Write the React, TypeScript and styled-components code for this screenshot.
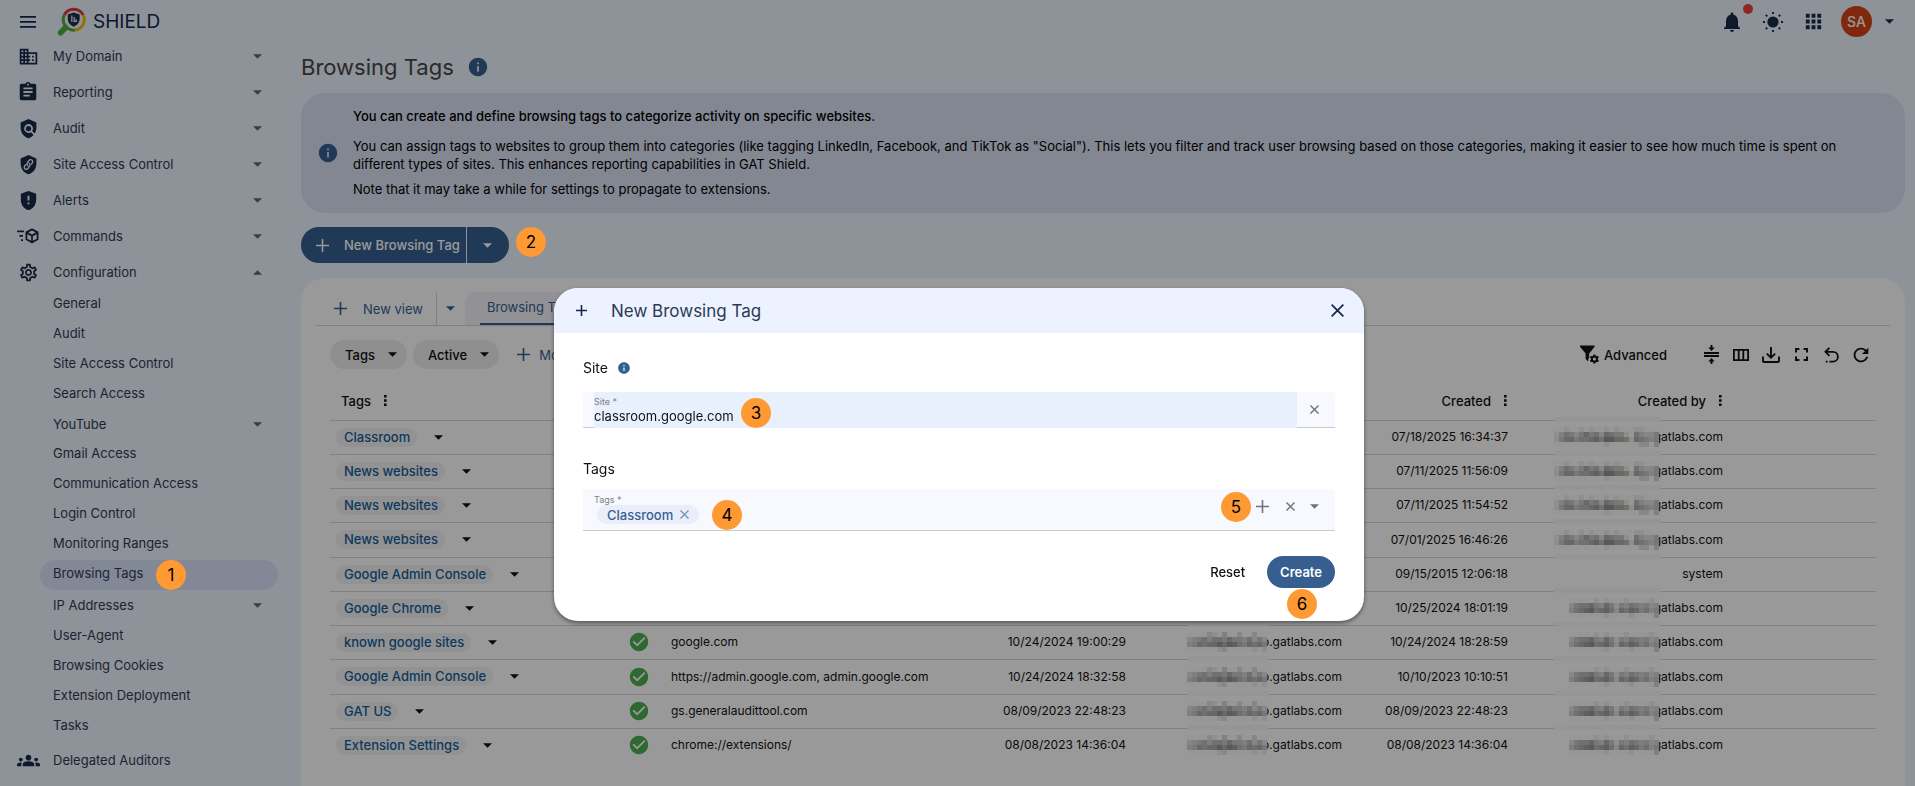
import React from "react";
import styled, { createGlobalStyle } from "styled-components";
import {
  MdApps,
  MdAssignment,
  MdCheckCircle,
  MdDomain,
  MdGppMaybe,
  MdGroups,
  MdInfo,
  MdNotifications,
  MdOutlineSettings,
  MdPolicy,
  MdRefresh,
} from "react-icons/md";

const GlobalStyle = createGlobalStyle`
  *, *::before, *::after { box-sizing: border-box; }
  body {
    margin: 0;
    background: #edf3ff;
    font-family: Inter, "Liberation Sans", sans-serif;
    font-size: 13px;
    line-height: 18px;
    color: #111;
  }
  button, input { font: inherit; color: inherit; }
  button { border: 0; padding: 0; background: none; cursor: pointer; }
  a { color: inherit; text-decoration: none; }
  svg { display: block; flex: none; }
  p, h1, h2, ul { margin: 0; padding: 0; }
`;

/* ---------- page frame ---------- */

const Page = styled.div`
  display: grid;
  grid-template-columns: 301px minmax(0, 1fr);
  min-height: 100vh;
`;

const Sidebar = styled.aside`
  color: #2f3d54;
`;

const Brand = styled.div`
  display: flex;
  align-items: center;
  height: 38px;
  padding: 5px 0 0 20px;
  font-size: 19px;
  color: #13294b;
`;

const MenuButton = styled.button`
  margin-right: 21px;
`;

const BrandName = styled.span`
  margin-left: 7px;
`;

const NavList = styled.ul`
  list-style: none;
`;

const navRow = `
  display: flex;
  align-items: center;
  width: 100%;
  text-align: left;
`;

const NavButton = styled.button`
  ${navRow}
  height: 36px;
  padding: 0 39px 0 16px;
`;

const NavLink = styled.a`
  ${navRow}
  height: 36px;
  padding: 0 39px 0 16px;
`;

const NavIcon = styled.span`
  display: flex;
  justify-content: center;
  width: 24px;
  margin-right: 13px;
  color: #182c49;
`;

const NavLabel = styled.span`
  flex: 1;
`;

const NavCaret = styled.span`
  color: #666;
`;

const SubLink = styled.a<{ $active?: boolean }>`
  display: flex;
  align-items: center;
  position: relative;
  height: 30px;
  margin: 0 23px 0 40px;
  padding: 0 16px 4px 13px;
  border-radius: 15px;
  background: ${(p) => (p.$active ? "#dae3fb" : "transparent")};
`;

const SubButton = styled.button<{ $tall?: boolean }>`
  ${navRow}
  height: ${(p) => (p.$tall ? 32 : 30)}px;
  padding: 0 39px 2px 53px;
`;

const Main = styled.main`
  display: flex;
  flex-direction: column;
  padding-right: 10px;
`;

const TopBar = styled.header`
  display: flex;
  align-items: center;
  justify-content: flex-end;
  height: 43px;
  padding-right: 11px;
  color: #182c49;
`;

const TopButton = styled.button`
  position: relative;
  display: flex;
  align-items: center;
  justify-content: center;
  width: 41px;
  height: 36px;
`;

const Dot = styled.span`
  position: absolute;
  top: 0;
  right: -1px;
  width: 10px;
  height: 10px;
  border-radius: 50%;
  background: #e8403a;
`;

const Account = styled.button`
  display: flex;
  align-items: center;
  gap: 13px;
  margin-left: 7px;
`;

const Avatar = styled.span`
  display: flex;
  align-items: center;
  justify-content: center;
  width: 31px;
  height: 31px;
  border-radius: 50%;
  background: #d84315;
  color: #fff;
  font-size: 14px;
  font-weight: 500;
`;

const TitleRow = styled.div`
  display: flex;
  align-items: center;
  gap: 13px;
  height: 47px;
  margin-bottom: 3px;
  color: #365f90;
`;

const Title = styled.h1`
  font-size: 22px;
  line-height: 28px;
  font-weight: 400;
  color: #474747;
`;

const Banner = styled.section`
  display: flex;
  align-items: center;
  gap: 14px;
  padding: 14px 14px 15px 16px;
  border-radius: 24px;
  background: #d9e2f4;
  color: #365f90;
`;

const BannerText = styled.div`
  flex: 1;
  color: #000;
`;

const Lead = styled.p`
  margin-bottom: 12px;
  font-weight: 500;
`;

const Para = styled.p`
  & + & {
    margin-top: 7px;
  }
`;

const SplitButton = styled.div`
  position: relative;
  display: flex;
  align-self: flex-start;
  margin: 14px 0 15px;
`;

const NewTagButton = styled.button`
  display: flex;
  align-items: center;
  gap: 15px;
  height: 36px;
  padding: 0 6px 0 15px;
  border-radius: 18px 0 0 18px;
  background: #365f90;
  color: #fff;
  font-weight: 500;
`;

const SplitToggle = styled.button`
  display: flex;
  align-items: center;
  justify-content: center;
  width: 42px;
  height: 36px;
  margin-left: 1px;
  border-radius: 0 18px 18px 0;
  background: #365f90;
  color: #fff;
`;

/* ---------- data card ---------- */

const Card = styled.section`
  flex: 1;
  padding: 14px 15px 22px;
  border-radius: 24px 24px 0 0;
  background: #fff;
`;

const Tabs = styled.div`
  display: flex;
  height: 34px;
  border-bottom: 1px solid #d6d6d6;
  color: #365f90;
`;

const NewView = styled.button`
  display: flex;
  align-items: center;
  gap: 16px;
  padding: 0 13px 0 18px;
`;

const ViewMenu = styled.button`
  display: flex;
  align-items: center;
  justify-content: center;
  width: 29px;
  border-left: 1px solid #d6d6d6;
`;

const Tab = styled.button`
  padding: 0 15px;
  border-radius: 12px 12px 0 0;
  background: #f3f3fa;
`;

const TabLabel = styled.span`
  display: flex;
  align-items: center;
  height: 33px;
  padding: 0 7px 1px;
  border-bottom: 2px solid #365f90;
`;

const Toolbar = styled.div`
  display: flex;
  align-items: center;
  height: 29px;
  margin: 14px 14px 13px;
`;

const FilterPill = styled.button`
  display: flex;
  align-items: center;
  gap: 13px;
  height: 29px;
  margin-right: 6px;
  padding: 0 10px 0 15px;
  border-radius: 15px;
  background: #eee;
  font-weight: 500;
`;

const MoreButton = styled.button`
  display: flex;
  align-items: center;
  gap: 9px;
  padding-left: 12px;
  color: #365f90;
`;

const Advanced = styled.button`
  display: flex;
  align-items: center;
  gap: 5px;
  margin-left: auto;
  margin-right: 29px;
  font-weight: 500;
`;

const ToolButton = styled.button`
  display: flex;
  justify-content: center;
  width: 30px;
`;

const Table = styled.table`
  width: calc(100% - 28px);
  margin: 0 14px;
  table-layout: fixed;
  border-collapse: separate;
  border-spacing: 0;
`;

const Col = styled.col<{ $w?: number }>`
  width: ${(p) => (p.$w ? `${p.$w}px` : "auto")};
`;

const Th = styled.th`
  height: 39px;
  padding: 0 11px 1px;
  border-bottom: 1px solid #d6d6d6;
  font-weight: 500;
  text-align: left;
`;

const ThInner = styled.span<{ $right?: boolean }>`
  display: flex;
  align-items: center;
  justify-content: ${(p) => (p.$right ? "flex-end" : "flex-start")};
  gap: 13px;
`;

const Row = styled.tr`
  height: 34px;
  &:nth-child(4n) {
    height: 35px;
  }
  &:last-child td {
    border-bottom-color: transparent;
  }
`;

const Td = styled.td<{ $right?: boolean }>`
  position: relative;
  padding: 0 10px 1px;
  border-bottom: 1px solid #d6d6d6;
  font-size: 12px;
  text-align: ${(p) => (p.$right ? "right" : "left")};
  white-space: nowrap;
`;

const TagCell = styled(Td)`
  padding-left: 6px;
`;

const StatusCell = styled(Td)`
  padding-left: 13px;
`;

const MaskedTd = styled(Td)<{ $edge: number; $band: number }>`
  &::before {
    content: "";
    position: absolute;
    top: -4px;
    right: ${(p) => p.$edge}px;
    width: ${(p) => p.$band}px;
    height: 5px;
    background: #f8f8f8;
  }
`;

const Flow = styled.span`
  display: flex;
  align-items: center;
`;

const Chip = styled.span`
  height: 19px;
  margin-right: 17px;
  padding: 0 7px 0 8px;
  border-radius: 10px;
  background: #f3f3f3;
  color: #14609c;
  font-size: 13px;
  font-weight: 500;
`;

const Plain = styled.button`
  display: flex;
`;

const Green = styled.span`
  display: flex;
  color: #4caf50;
`;

const Email = styled.span`
  display: flex;
  align-items: center;
  justify-content: flex-end;
  svg {
    position: relative;
    margin-right: -5px;
  }
`;

/* ---------- dialog ---------- */

const Backdrop = styled.div`
  position: fixed;
  inset: 0;
  z-index: 10;
  display: flex;
  align-items: flex-start;
  justify-content: center;
  padding: 288px 0 0 3px;
  background: rgba(0, 0, 0, 0.4);
`;

const Dialog = styled.div`
  width: 810px;
  max-width: 100%;
  border-radius: 24px;
  background: #fff;
  box-shadow: 0 2px 4px rgba(0, 0, 0, 0.45);
`;

const DialogHead = styled.div`
  display: flex;
  align-items: center;
  height: 45px;
  padding: 0 20px 0 22px;
  border-radius: 24px 24px 0 0;
  background: #ecf2ff;
  color: #13294b;
`;

const DialogTitle = styled.h2`
  flex: 1;
  margin-left: 24px;
  font-size: 17px;
  line-height: 24px;
  font-weight: 400;
  color: #2a3b55;
`;

const DialogBody = styled.form`
  padding: 25px 29px 33px;
`;

const GroupTitle = styled.div<{ $gap: number }>`
  display: flex;
  align-items: center;
  gap: 9px;
  height: 20px;
  margin-bottom: ${(p) => p.$gap}px;
  font-size: 14px;
  color: #365f90;
`;

const GroupText = styled.span`
  color: #111;
`;

const Field = styled.div`
  position: relative;
  display: flex;
  align-items: stretch;
  height: 36px;
  margin-bottom: 31px;
  padding-left: 11px;
  border-radius: 4px 4px 0 0;
  border-bottom: 1px solid #c9cacf;
  background: #f8f9ff;
  color: #6f7276;
`;

const FieldLabel = styled.label`
  font-size: 9px;
  line-height: 11px;
  color: #7c8087;
`;

const Filled = styled.div`
  position: relative;
  z-index: 1;
  flex: 1;
  display: flex;
  flex-direction: column;
  margin-bottom: -1px;
  padding-top: 4px;
  background: #e8f0fe;
`;

const SiteInput = styled.input`
  width: 100%;
  height: 18px;
  padding: 0;
  border: 0;
  outline: 0;
  background: transparent;
  color: #111;
`;

const FieldButton = styled.button<{ $w: number }>`
  display: flex;
  align-items: center;
  justify-content: center;
  width: ${(p) => p.$w}px;
`;

const ClearSite = styled(FieldButton)`
  padding-right: 4px;
`;

const TagField = styled(Field)`
  height: 42px;
  margin-bottom: 25px;
`;

const TagArea = styled.div`
  flex: 1;
  padding-top: 5px;
  display: flex;
  flex-direction: column;
`;

const PickedRow = styled.div`
  position: relative;
  display: flex;
  align-items: center;
  padding-left: 3px;
`;

const Picked = styled.span`
  display: flex;
  align-items: center;
  gap: 7px;
  height: 19px;
  padding: 0 10px;
  border-radius: 10px;
  background: #ebedfa;
  color: #365f90;
  font-weight: 500;
`;

const RemovePicked = styled(Plain)`
  color: #7896bb;
`;

const TagInput = styled.input`
  flex: 1;
  min-width: 0;
  height: 18px;
  padding: 0;
  border: 0;
  outline: 0;
  background: transparent;
`;

const FieldActions = styled.div`
  position: relative;
  display: flex;
  align-items: center;
  padding: 0 11px 6px 0;
`;

const Actions = styled.div`
  display: flex;
  justify-content: flex-end;
  align-items: center;
  gap: 22px;
  font-weight: 500;
`;

const CreateWrap = styled.div`
  position: relative;
`;

const CreateButton = styled.button`
  height: 32px;
  padding: 0 13px;
  border-radius: 16px;
  background: #365f90;
  color: #fff;
  font-weight: 600;
`;

/* Numbered step marker that sits over the interface. */
const Step = styled.span<{ $left: string; $top: number }>`
  position: absolute;
  z-index: 20;
  left: ${(p) => p.$left};
  top: ${(p) => p.$top}px;
  display: flex;
  align-items: center;
  justify-content: center;
  width: 30px;
  height: 30px;
  border-radius: 50%;
  background: #ff9933;
  color: #000;
  font-size: 17px;
  font-weight: 400;
`;

/* ---------- drawings ---------- */

const Caret = ({ up = false }: { up?: boolean }) => (
  <svg width="9" height="5" viewBox="0 0 10 5" fill="currentColor" aria-hidden="true">
    <path d={up ? "M0 5 5 0l5 5z" : "M0 0h10L5 5z"} />
  </svg>
);

const Plus = ({ size = 12, w = 2 }: { size?: number; w?: number }) => (
  <svg width={size} height={size} viewBox={`0 0 ${size} ${size}`} stroke="currentColor" strokeWidth={w} aria-hidden="true">
    <path d={`M${size / 2} 0v${size}M0 ${size / 2}h${size}`} />
  </svg>
);

const Cross = ({ size = 9, w = 1.4 }: { size?: number; w?: number }) => (
  <svg width={size} height={size} viewBox="0 0 10 10" stroke="currentColor" strokeWidth={(w * 10) / size} aria-hidden="true">
    <path d="M.5.5l9 9M9.5.5l-9 9" />
  </svg>
);

const Dots = () => (
  <svg width="3" height="11" viewBox="0 0 3 11" fill="currentColor" aria-hidden="true">
    <path d="M0 0h2.6v2.6H0zM0 4.2h2.6v2.6H0zM0 8.4h2.6V11H0z" />
  </svg>
);

const Burger = () => (
  <svg width="16" height="12" viewBox="0 0 16 12" fill="currentColor" aria-hidden="true">
    <path d="M0 0h16v1.7H0zM0 5h16v1.7H0zM0 10h16v1.7H0z" />
  </svg>
);

const Logo = () => (
  <svg width="29" height="30" viewBox="0 0 29 30" fill="none" aria-hidden="true">
    <circle cx="16.7" cy="12.5" r="9.5" fill="#f4f6fa" />
    <path d="M8.6 20.5l-5 5.2" stroke="#4caf3a" strokeWidth="5.6" strokeLinecap="round" />
    <path d="M7.2 8.2A10.6 10.6 0 0 1 26.2 8" stroke="#e03b36" strokeWidth="3" />
    <path d="M26.2 8a10.6 10.6 0 0 1-8.4 15.1" stroke="#f2bd0c" strokeWidth="3" />
    <path d="M17.8 23.1A10.6 10.6 0 0 1 7.2 8.2" stroke="#4caf3a" strokeWidth="3" />
    <path d="M16.7 5.4l6 2.1v4.2c0 3.6-2.4 6.4-6 8-3.6-1.6-6-4.4-6-8V7.5z" fill="#1d2f4c" />
    <path d="M14.8 15V8.6M17.2 10v4.6M19.2 12.2v2.6M16.3 14.3h4" stroke="#dfe5ef" strokeWidth="1.3" />
  </svg>
);

const ShieldLink = () => (
  <svg width="21" height="21" viewBox="0 0 24 24" aria-hidden="true">
    <path fill="currentColor" d="M12 1 3 5v6c0 5.55 3.84 10.74 9 12 5.16-1.26 9-6.45 9-12V5z" />
    <g fill="none" stroke="#edf3ff" strokeWidth="1.5" strokeLinecap="round" transform="rotate(-10 12 12)">
      <path d="M11 13.2a2.4 2.4 0 0 1 0-3.3l2.2-2.3a2.4 2.4 0 0 1 3.4 3.4l-1.2 1.2" />
      <path d="M13 10.7a2.4 2.4 0 0 1 0 3.4l-2.2 2.2a2.4 2.4 0 0 1-3.4-3.4l1.2-1.2" />
    </g>
  </svg>
);

const CommandBox = () => (
  <svg width="22" height="16" viewBox="0 0 22 16" fill="none" stroke="currentColor" strokeWidth="1.8" aria-hidden="true">
    <path d="M0 3.4h7M2.4 7.8H6M4 12.2h2" />
    <path d="M15 1.4l5.6 3v6.8L15 14.4l-5.6-3.2V4.4zM9.6 4.6l5.4 3 5.4-3M15 7.6v6.6" strokeLinejoin="round" />
  </svg>
);

const Sun = () => (
  <svg width="20" height="20" viewBox="0 0 20 20" aria-hidden="true">
    <circle cx="10" cy="10" r="5.6" fill="currentColor" />
    <path
      d="M10 0v2M10 18v2M0 10h2M18 10h2M2.8 2.8l1.5 1.5M15.7 15.7l1.5 1.5M2.8 17.2l1.5-1.5M15.7 4.3l1.5-1.5"
      stroke="currentColor"
      strokeWidth="1.9"
    />
  </svg>
);

const FilterCog = () => (
  <svg width="19" height="19" viewBox="0 0 19 19" fill="currentColor" aria-hidden="true">
    <path d="M0 .6h14.6v1.2L9.2 8.6v4.2l-1 1.4v2.4L5.6 14V8.6L0 1.8z" />
    <circle cx="14.4" cy="14" r="2.6" fill="none" stroke="currentColor" strokeWidth="2" />
    <path
      d="M14.4 9.4v2M14.4 16.6v2M10.4 11.7l1.7 1M16.7 15.3l1.7 1M10.4 16.3l1.7-1M16.7 12.7l1.7-1"
      stroke="currentColor"
      strokeWidth="2"
    />
  </svg>
);

const Compress = () => (
  <svg width="15" height="19" viewBox="0 0 15 19" aria-hidden="true">
    <path d="M0 8h15M0 11h15M7.5 0v3M7.5 16v3" stroke="currentColor" strokeWidth="1.9" />
    <path d="M4.3 2.6h6.4L7.5 6zM4.3 16.4h6.4L7.5 13z" fill="currentColor" />
  </svg>
);

const Columns = () => (
  <svg width="16" height="12" viewBox="0 0 16 12" fill="none" stroke="currentColor" strokeWidth="1.8" aria-hidden="true">
    <path d="M.9.9h14.2v10.2H.9zM5.7.9v10.2M10.3.9v10.2" />
  </svg>
);

const Download = () => (
  <svg width="18" height="16" viewBox="0 0 18 16" fill="none" stroke="currentColor" strokeWidth="1.9" aria-hidden="true">
    <path d="M1 9.5V14a1 1 0 0 0 1 1h14a1 1 0 0 0 1-1V9.5M9 0v10.4M4.8 6.6L9 10.6l4.2-4" />
  </svg>
);

const Expand = () => (
  <svg width="13" height="13" viewBox="0 0 13 13" fill="none" stroke="currentColor" strokeWidth="2" aria-hidden="true">
    <path d="M1 4.4V1h3.4M8.6 1H12v3.4M12 8.6V12H8.6M4.4 12H1V8.6" />
  </svg>
);

const Undo = () => (
  <svg width="15" height="16" viewBox="0 0 15 16" fill="none" stroke="currentColor" strokeWidth="1.8" aria-hidden="true">
    <path d="M5.4.8L1.4 4.8l4 4M1.6 4.8H9a4.8 4.8 0 0 1 0 9.8H5.4M3.6 14.6H1.8" />
  </svg>
);

/* Pixelated mask over the private part of an address: one digit per 5px cell. */
const MASKS: Record<string, string[]> = {
  long: [
    "001001010010100011000",
    "135424645265441053224",
    "146645567588665165434",
    "000000000010000002203",
  ],
  short: [
    "000001010001000010",
    "245564364143543423",
    "356785675265764534",
    "000000010000100003",
  ],
  narrow: [
    "0000210300200200",
    "2345355464435242",
    "3465668687546564",
    "0000001200000101",
  ],
};

const Mask = ({ kind }: { kind: string }) => {
  const rows = MASKS[kind];
  const width = rows[0].length * 5;
  return (
    <svg width={width} height="20" viewBox={`0 0 ${width} 20`} aria-hidden="true" shapeRendering="crispEdges">
      {rows.map((line, y) =>
        line.split("").map((d, x) => {
          const v = 252 - Number(d) * 13;
          const tint = (x * 7 + y * 3) % 5;
          return (
            <rect
              key={`${x}-${y}`}
              x={x * 5}
              y={y * 5}
              width="5"
              height="5"
              fill={`rgb(${v + (tint === 1 && d !== "0" ? 3 : 0)},${v - (tint === 1 ? 4 : 0)},${v + (tint === 3 && d !== "0" ? 3 : -3)})`}
            />
          );
        })
      )}
    </svg>
  );
};

/* ---------- content ---------- */

type NavEntry = { label: string; icon: React.ReactNode; open?: boolean };

const NAV: NavEntry[] = [
  { label: "My Domain", icon: <MdDomain size={21} /> },
  { label: "Reporting", icon: <MdAssignment size={22} /> },
  { label: "Audit", icon: <MdPolicy size={21} /> },
  { label: "Site Access Control", icon: <ShieldLink /> },
  { label: "Alerts", icon: <MdGppMaybe size={23} /> },
  { label: "Commands", icon: <CommandBox /> },
  { label: "Configuration", icon: <MdOutlineSettings size={21} />, open: true },
];

const SUB = [
  "General",
  "Audit",
  "Site Access Control",
  "Search Access",
  "YouTube",
  "Gmail Access",
  "Communication Access",
  "Login Control",
  "Monitoring Ranges",
  "Browsing Tags",
  "IP Addresses",
  "User-Agent",
  "Browsing Cookies",
  "Extension Deployment",
  "Tasks",
];

type Entry = {
  tag: string;
  site?: string;
  updated?: string;
  created: string;
  mask?: string;
};

const ENTRIES: Entry[] = [
  { tag: "Classroom", created: "07/18/2025 16:34:37", mask: "long" },
  { tag: "News websites", created: "07/11/2025 11:56:09", mask: "long" },
  { tag: "News websites", created: "07/11/2025 11:54:52", mask: "long" },
  { tag: "News websites", created: "07/01/2025 16:46:26", mask: "long" },
  { tag: "Google Admin Console", created: "09/15/2015 12:06:18" },
  { tag: "Google Chrome", created: "10/25/2024 18:01:19", mask: "short" },
  { tag: "known google sites", site: "google.com", updated: "10/24/2024 19:00:29", created: "10/24/2024 18:28:59", mask: "short" },
  { tag: "Google Admin Console", site: "https://admin.google.com, admin.google.com", updated: "10/24/2024 18:32:58", created: "10/10/2023 10:10:51", mask: "short" },
  { tag: "GAT US", site: "gs.generalaudittool.com", updated: "08/09/2023 22:48:23", created: "08/09/2023 22:48:23", mask: "short" },
  { tag: "Extension Settings", site: "chrome://extensions/", updated: "08/08/2023 14:36:04", created: "08/08/2023 14:36:04", mask: "short" },
];

const HeadCell = ({ text, right }: { text: string; right?: boolean }) => (
  <Th scope="col">
    <ThInner $right={right}>
      {text}
      <Plain type="button" aria-label={`${text} column menu`}>
        <Dots />
      </Plain>
    </ThInner>
  </Th>
);

const SideNav = () => (
  <Sidebar>
    <Brand>
      <MenuButton type="button" aria-label="Menu">
        <Burger />
      </MenuButton>
      <Logo />
      <BrandName>SHIELD</BrandName>
    </Brand>
    <nav>
      <NavList>
        {NAV.map((n) => (
          <li key={n.label}>
            <NavButton type="button" aria-expanded={!!n.open}>
              <NavIcon>{n.icon}</NavIcon>
              <NavLabel>{n.label}</NavLabel>
              <NavCaret>
                <Caret up={n.open} />
              </NavCaret>
            </NavButton>
          </li>
        ))}
        {SUB.map((label) => (
          <li key={`sub-${label}`}>
            {label === "YouTube" || label === "IP Addresses" ? (
              <SubButton type="button" aria-expanded={false} $tall={label === "IP Addresses"}>
                <NavLabel>{label}</NavLabel>
                <NavCaret>
                  <Caret />
                </NavCaret>
              </SubButton>
            ) : (
              <SubLink href="#" $active={label === "Browsing Tags"}>
                {label}
                {label === "Browsing Tags" && (
                  <Step $left="116px" $top={0}>
                    1
                  </Step>
                )}
              </SubLink>
            )}
          </li>
        ))}
        <li>
          <NavLink href="#">
            <NavIcon>
              <MdGroups size={23} />
            </NavIcon>
            <NavLabel>Delegated Auditors</NavLabel>
          </NavLink>
        </li>
      </NavList>
    </nav>
  </Sidebar>
);

const TagTable = () => (
  <Table>
    <colgroup>
      <Col $w={285} />
      <Col $w={46} />
      <Col />
      <Col $w={160} />
      <Col $w={216} />
      <Col $w={166} />
      <Col $w={215} />
      <Col $w={143} />
    </colgroup>
    <thead>
      <tr>
        <HeadCell text="Tags" />
        <Th />
        <HeadCell text="Site" />
        <HeadCell text="Updated" right />
        <HeadCell text="Updated by" right />
        <HeadCell text="Created" right />
        <HeadCell text="Created by" right />
        <Th />
      </tr>
    </thead>
    <tbody>
      {ENTRIES.map((e, i) => (
        <Row key={i}>
          <TagCell>
            <Flow>
              <Chip>{e.tag}</Chip>
              <Plain type="button" aria-label={`${e.tag} actions`}>
                <Caret />
              </Plain>
            </Flow>
          </TagCell>
          <StatusCell>
            {e.site && (
              <Green>
                <MdCheckCircle size={22} />
              </Green>
            )}
          </StatusCell>
          <Td>{e.site}</Td>
          <Td $right>{e.updated}</Td>
          <MaskedTd $right $edge={83} $band={81}>
            {e.updated && (
              <Email>
                <Mask kind="narrow" />
                o.gatlabs.com
              </Email>
            )}
          </MaskedTd>
          <Td $right>{e.created}</Td>
          <MaskedTd $right $edge={72} $band={107}>
            {e.mask ? (
              <Email>
                <Mask kind={e.mask} />
                gatlabs.com
              </Email>
            ) : (
              "system"
            )}
          </MaskedTd>
          <Td />
        </Row>
      ))}
    </tbody>
  </Table>
);

const NewTagDialog = () => (
  <Backdrop>
    <Dialog role="dialog" aria-modal="true" aria-labelledby="dialog-title">
      <DialogHead>
        <Plus size={11} w={1.6} />
        <DialogTitle id="dialog-title">New Browsing Tag</DialogTitle>
        <Plain type="button" aria-label="Close">
          <Cross size={13} w={1.8} />
        </Plain>
      </DialogHead>
      <DialogBody onSubmit={(ev) => ev.preventDefault()}>
        <GroupTitle $gap={14}>
          <GroupText>Site</GroupText>
          <MdInfo size={14} />
        </GroupTitle>
        <Field>
          <Filled>
            <FieldLabel htmlFor="site">Site *</FieldLabel>
            <SiteInput id="site" type="text" defaultValue="classroom.google.com" />
            <Step $left="147px" $top={6}>
              3
            </Step>
          </Filled>
          <ClearSite type="button" aria-label="Clear site" $w={38}>
            <Cross size={9} />
          </ClearSite>
        </Field>
        <GroupTitle $gap={10}>
          <GroupText>Tags</GroupText>
        </GroupTitle>
        <TagField>
          <TagArea>
            <FieldLabel htmlFor="tags">Tags *</FieldLabel>
            <PickedRow>
              <Picked>
                Classroom
                <RemovePicked type="button" aria-label="Remove Classroom">
                  <Cross size={9} />
                </RemovePicked>
              </Picked>
              <TagInput id="tags" type="text" />
              <Step $left="118px" $top={-5}>
                4
              </Step>
            </PickedRow>
          </TagArea>
          <FieldActions>
            <Step $left="-26px" $top={3}>
              5
            </Step>
            <FieldButton type="button" aria-label="Add tag" $w={30}>
              <Plus size={13} w={1.6} />
            </FieldButton>
            <FieldButton type="button" aria-label="Clear tags" $w={27}>
              <Cross size={9} />
            </FieldButton>
            <FieldButton type="button" aria-label="Open tag list" $w={20}>
              <Caret />
            </FieldButton>
          </FieldActions>
        </TagField>
        <Actions>
          <button type="reset">Reset</button>
          <CreateWrap>
            <CreateButton type="submit">Create</CreateButton>
            <Step $left="calc(50% - 14px)" $top={33}>
              6
            </Step>
          </CreateWrap>
        </Actions>
      </DialogBody>
    </Dialog>
  </Backdrop>
);

export default function App() {
  return (
    <>
      <GlobalStyle />
      <Page>
        <SideNav />
        <Main>
          <TopBar>
            <TopButton type="button" aria-label="Notifications">
              <MdNotifications size={24} />
              <Dot />
            </TopButton>
            <TopButton type="button" aria-label="Theme">
              <Sun />
            </TopButton>
            <TopButton type="button" aria-label="Apps">
              <MdApps size={23} />
            </TopButton>
            <Account type="button" aria-label="Account">
              <Avatar>SA</Avatar>
              <Caret />
            </Account>
          </TopBar>
          <TitleRow>
            <Title>Browsing Tags</Title>
            <MdInfo size={22} />
          </TitleRow>
          <Banner>
            <MdInfo size={22} />
            <BannerText>
              <Lead>You can create and define browsing tags to categorize activity on specific websites.</Lead>
              <Para>
                You can assign tags to websites to group them into categories (like tagging LinkedIn, Facebook, and
                TikTok as "Social"). This lets you filter and track user browsing based on those categories, making it
                easier to see how much time is spent on different types of sites. This enhances reporting capabilities
                in GAT Shield.
              </Para>
              <Para>Note that it may take a while for settings to propagate to extensions.</Para>
            </BannerText>
          </Banner>
          <SplitButton>
            <NewTagButton type="button">
              <Plus size={13} w={1.6} />
              New Browsing Tag
            </NewTagButton>
            <SplitToggle type="button" aria-label="More create options">
              <Caret />
            </SplitToggle>
            <Step $left="calc(100% + 7px)" $top={0}>
              2
            </Step>
          </SplitButton>
          <Card>
            <Tabs>
              <NewView type="button">
                <Plus size={13} w={1.6} />
                New view
              </NewView>
              <ViewMenu type="button" aria-label="Views">
                <Caret />
              </ViewMenu>
              <Tab type="button">
                <TabLabel>Browsing Tags</TabLabel>
              </Tab>
            </Tabs>
            <Toolbar>
              <FilterPill type="button">
                Tags
                <Caret />
              </FilterPill>
              <FilterPill type="button">
                Active
                <Caret />
              </FilterPill>
              <MoreButton type="button">
                <Plus size={13} w={1.6} />
                More
              </MoreButton>
              <Advanced type="button">
                <FilterCog />
                Advanced
              </Advanced>
              <ToolButton type="button" aria-label="Row density">
                <Compress />
              </ToolButton>
              <ToolButton type="button" aria-label="Columns">
                <Columns />
              </ToolButton>
              <ToolButton type="button" aria-label="Download">
                <Download />
              </ToolButton>
              <ToolButton type="button" aria-label="Full screen">
                <Expand />
              </ToolButton>
              <ToolButton type="button" aria-label="Undo">
                <Undo />
              </ToolButton>
              <ToolButton type="button" aria-label="Refresh">
                <MdRefresh size={22} />
              </ToolButton>
            </Toolbar>
            <TagTable />
          </Card>
        </Main>
      </Page>
      <NewTagDialog />
    </>
  );
}
